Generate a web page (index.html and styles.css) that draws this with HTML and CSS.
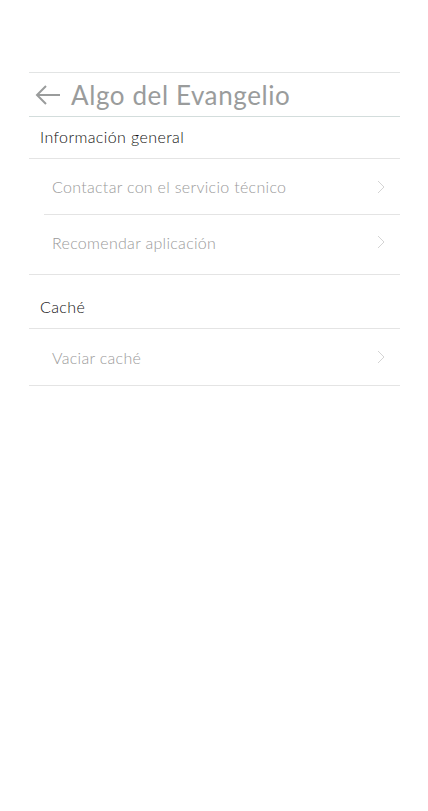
FILE: index.html
```html
<!DOCTYPE html>
<html lang="es">

<head>
  <meta charset="utf-8">
  <title>Algo del Evangelio</title>
  <link rel="stylesheet" href="styles.css">
</head>

<body>
  <div class="page">
    <header class="topbar">
      <svg class="back" width="26" height="22" viewBox="0 0 26 22">
        <path d="M25 11H2M11 2L2 11l9 9" fill="none" stroke="#9a9c9c" stroke-width="2"/>
      </svg>
      <h1>Algo del Evangelio</h1>
    </header>

    <div class="section">Información general</div>
    <a class="item" href="#">
      <span>Contactar con el servicio técnico</span>
      <svg class="chev" width="8" height="14" viewBox="0 0 8 14"><path d="M1 1l6 6-6 6" fill="none" stroke="#d4d4d4" stroke-width="1"/></svg>
    </a>
    <a class="item item-last item-tall" href="#">
      <span>Recomendar aplicación</span>
      <svg class="chev chev-up" width="8" height="14" viewBox="0 0 8 14"><path d="M1 1l6 6-6 6" fill="none" stroke="#d4d4d4" stroke-width="1"/></svg>
    </a>

    <div class="section section-gap">Caché</div>
    <a class="item item-last item-end" href="#">
      <span>Vaciar caché</span>
      <svg class="chev" width="8" height="14" viewBox="0 0 8 14"><path d="M1 1l6 6-6 6" fill="none" stroke="#d4d4d4" stroke-width="1"/></svg>
    </a>
  </div>
</body>

</html>
```
FILE: styles.css
```css
* {
  box-sizing: border-box;
}

body {
  margin: 0;
  background-color: #fff;
  font-family: Lato, "Open Sans", sans-serif;
  font-weight: 300;
  color: #333;
}

.page {
  margin: 72px 28px 0 29px;
  border-top: 1px solid #e2e4e4;
}

.topbar {
  display: flex;
  align-items: center;
  height: 44px;
  padding-left: 6px;
  border-bottom: 1px solid #d3dddc;
}

.back {
  margin-right: 10px;
}

h1 {
  margin: 0;
  font-size: 26px;
  font-weight: 400;
  color: #9a9c9c;
  letter-spacing: 0.6px;
}

.section {
  display: flex;
  align-items: center;
  height: 42px;
  padding-left: 11px;
  padding-bottom: 2px;
  font-size: 16px;
  letter-spacing: 0.4px;
  color: #111;
  border-bottom: 1px solid #e4e4e4;
}

.section-gap {
  height: 54px;
  padding-top: 12px;
}

.item {
  display: flex;
  align-items: center;
  justify-content: space-between;
  height: 56px;
  margin-left: 15px;
  padding: 0 15px 0 8px;
  font-size: 16px;
  letter-spacing: 0.3px;
  color: #9a9a9a;
  text-decoration: none;
  border-bottom: 1px solid #e4e4e4;
}

.item-tall {
  height: 60px;
  padding-bottom: 4px;
}

.item-end {
  height: 57px;
}

.item-last {
  margin-left: 0;
  padding-left: 23px;
}

.chev-up {
  margin-top: -2px;
}
```
